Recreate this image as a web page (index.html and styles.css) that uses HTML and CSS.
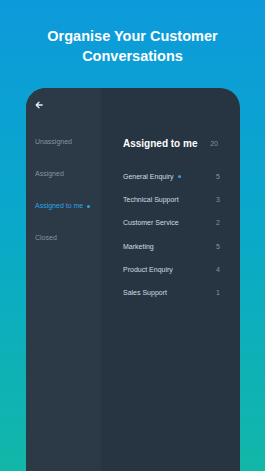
FILE: index.html
```html
<!DOCTYPE html>
<html lang="en">
<head>
    <meta charset="UTF-8">
    <meta name="viewport" content="width=device-width, initial-scale=1.0">
    <title>Organise Your Customer Conversations</title>
    <link rel="stylesheet" href="styles.css">
</head>
<body>
    <h1 class="tytul">Organise Your Customer<br>Conversations</h1>
    <div class="telefon">
        <div class="lewy">
            <svg class="strzalka" width="8" height="8" viewBox="0 0 8 8">
                <path d="M7.2 4H1.2M4 1.2L1.2 4L4 6.8" stroke="#e6ecf0" stroke-width="1.3" fill="none" stroke-linecap="round" stroke-linejoin="round"/>
            </svg>
            <ul class="menu">
                <li>Unassigned</li>
                <li>Assigned</li>
                <li class="aktywny">Assigned to me <span class="kropka"></span></li>
                <li>Closed</li>
            </ul>
        </div>
        <div class="prawy">
            <div class="naglowek">
                <span>Assigned to me</span>
                <span class="suma">20</span>
            </div>
            <ul class="lista">
                <li><span>General Enquiry <span class="kropka"></span></span><span class="ile">5</span></li>
                <li><span>Technical Support</span><span class="ile">3</span></li>
                <li><span>Customer Service</span><span class="ile">2</span></li>
                <li><span>Marketing</span><span class="ile">5</span></li>
                <li><span>Product Enquiry</span><span class="ile">4</span></li>
                <li><span>Sales Support</span><span class="ile">1</span></li>
            </ul>
        </div>
    </div>
</body>
</html>
```

FILE: styles.css
```css
html, body {
    margin: 0;
    padding: 0;
    height: 471px;
    overflow: hidden;
}
body {
    background: linear-gradient(180deg, #0d9adb 0%, #0aa9c9 50%, #12b7a8 100%);
    font-family: "Liberation Sans", Arial, sans-serif;
}
ul {
    list-style: none;
    margin: 0;
    padding: 0;
}
.tytul {
    margin: 0;
    padding-top: 26px;
    font-size: 14.5px;
    line-height: 20px;
    font-weight: bold;
    color: #ffffff;
    text-align: center;
}
.telefon {
    display: flex;
    margin: 22px 0 0 26px;
    width: 214px;
    height: 383px;
    border-radius: 20px 20px 0 0;
    overflow: hidden;
    background-color: #263541;
}
.lewy {
    width: 75px;
    padding: 13px 0 0 9px;
    box-sizing: border-box;
    background-color: #2b3a46;
}
.strzalka {
    display: block;
}
.menu {
    margin-top: 17px;
}
.menu li {
    height: 32px;
    line-height: 32px;
    font-size: 7px;
    color: #8595a1;
    white-space: nowrap;
}
.menu .aktywny {
    color: #2ba3e6;
}
.kropka {
    display: inline-block;
    width: 3px;
    height: 3px;
    margin-left: 2px;
    border-radius: 50%;
    background-color: #2ba3e6;
    vertical-align: middle;
}
.prawy {
    flex: 1;
    padding: 45px 20px 0 22px;
}
.naglowek {
    display: flex;
    justify-content: space-between;
    align-items: center;
    height: 20px;
    font-size: 10px;
    font-weight: bold;
    color: #ffffff;
}
.suma {
    font-size: 7px;
    font-weight: normal;
    color: #8595a1;
    padding-right: 2px;
}
.lista {
    margin-top: 11.5px;
}
.lista li {
    display: flex;
    justify-content: space-between;
    align-items: center;
    height: 23.3px;
    font-size: 7px;
    color: #d3dbe1;
}
.ile {
    color: #8595a1;
}
```
